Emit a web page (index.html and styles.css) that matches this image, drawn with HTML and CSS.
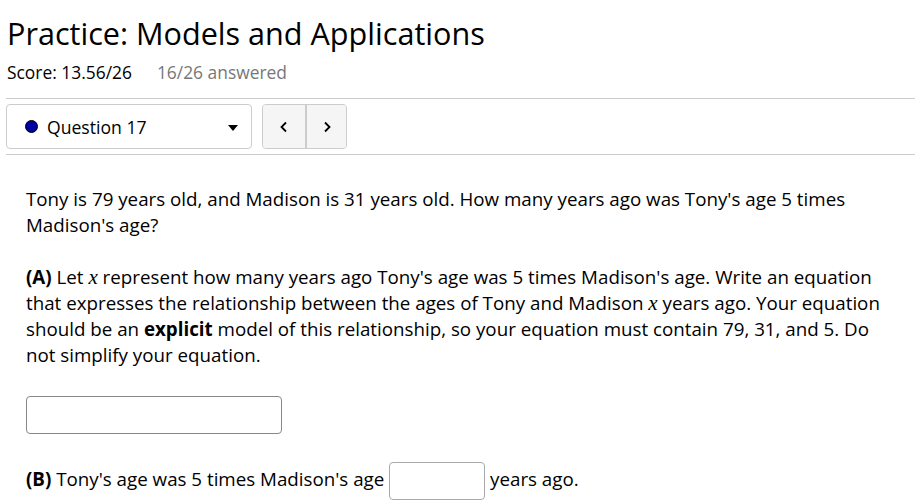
FILE: index.html
```html
<!DOCTYPE html>
<html>
<head>
<meta charset="utf-8">
<link rel="stylesheet" href="styles.css">
</head>
<body>
<div class="page">
  <h1 class="title">Practice: Models and Applications</h1>
  <div class="scoreline"><span class="score">Score: 13.56/26</span><span class="answered">16/26 answered</span></div>
  <div class="toolbar">
    <div class="qselect">
      <span class="dot"></span>
      <span class="qlabel">Question 17</span>
      <span class="caret"></span>
    </div>
    <div class="nav">
      <button class="navbtn">
        <svg width="10" height="12" viewBox="0 0 10 12"><path d="M7 1.5 L2.5 6 L7 10.5" fill="none" stroke="#000" stroke-width="1.8"/></svg>
      </button>
      <button class="navbtn">
        <svg width="10" height="12" viewBox="0 0 10 12"><path d="M3 1.5 L7.5 6 L3 10.5" fill="none" stroke="#000" stroke-width="1.8"/></svg>
      </button>
    </div>
  </div>
  <div class="question">
    <p class="para">Tony is 79 years old, and Madison is 31 years old. How many years ago was Tony's age 5 times Madison's age?</p>
    <p class="para"><b>(A)</b> Let <i class="mvar">x</i> represent how many years ago Tony's age was 5 times Madison's age. Write an equation that expresses the relationship between the ages of Tony and Madison <i class="mvar">x</i> years ago. Your equation should be an <b>explicit</b> model of this relationship, so your equation must contain 79, 31, and 5. Do not simplify your equation.</p>
    <div class="answer-wrap"><input class="answer" type="text"></div>
    <p class="para partb"><b>(B)</b> Tony's age was 5 times Madison's age <input class="small-answer" type="text"> years ago.</p>
  </div>
</div>
</body>
</html>
```
FILE: styles.css
```css
html, body {
  margin: 0;
  padding: 0;
  background: #fff;
}
body {
  font-family: "Open Sans", "Liberation Sans", sans-serif;
  color: #000;
  overflow: hidden;
}
.page {
  padding-left: 6px;
}
.title {
  margin: 13px 0 0 1px;
  font-size: 30.6px;
  font-weight: 400;
  line-height: 41px;
}
.scoreline {
  margin: 7px 0 0 1px;
  font-size: 17.4px;
  line-height: 22px;
}
.answered {
  color: #777;
  margin-left: 25px;
}
.toolbar {
  margin-top: 15px;
  border-top: 1px solid #ccc;
  border-bottom: 1px solid #ccc;
  padding: 5px 0 5px 0;
  display: flex;
  gap: 10px;
  align-items: stretch;
}
.qselect {
  width: 244px;
  height: 43px;
  border: 1px solid #ccc;
  border-radius: 4px;
  display: flex;
  align-items: center;
  box-sizing: content-box;
  padding: 0;
}
.dot {
  width: 11px;
  height: 11px;
  border-radius: 50%;
  background: #00009c;
  border: 1px solid #000;
  margin-left: 18px;
}
.qlabel {
  font-size: 17.6px;
  margin-left: 9px;
  flex: 1;
}
.caret {
  width: 0;
  height: 0;
  border-left: 5px solid transparent;
  border-right: 5px solid transparent;
  border-top: 6px solid #000;
  margin-right: 13px;
  margin-top: 2px;
}
.nav {
  display: flex;
  border: 1px solid #ccc;
  border-radius: 4px;
  background: #f5f5f5;
  overflow: hidden;
}
.navbtn {
  width: 42px;
  height: 43px;
  border: 0;
  background: #f5f5f5;
  padding: 0;
  display: flex;
  align-items: center;
  justify-content: center;
}
.navbtn + .navbtn {
  border-left: 2px solid #ccc;
  width: 41px;
}
.question {
  padding-left: 20px;
  padding-right: 20px;
  font-size: 18.75px;
  line-height: 26px;
}
.para {
  margin: 31px 0 0 0;
}
.para + .para {
  margin-top: 26px;
}
.mvar {
  font-family: "Liberation Serif", "DejaVu Serif", serif;
  font-style: italic;
  font-size: 21px;
  line-height: 1;
}
.answer-wrap {
  margin-top: 28px;
}
.answer {
  display: block;
  width: 256px;
  height: 38px;
  box-sizing: border-box;
  border: 1px solid #888;
  border-radius: 4px;
  margin: 0;
}
.partb {
  margin-top: 28px;
}
.small-answer {
  width: 96px;
  height: 38px;
  box-sizing: border-box;
  border: 1px solid #aaa;
  border-radius: 4px;
  vertical-align: middle;
  margin: 0;
}
```
